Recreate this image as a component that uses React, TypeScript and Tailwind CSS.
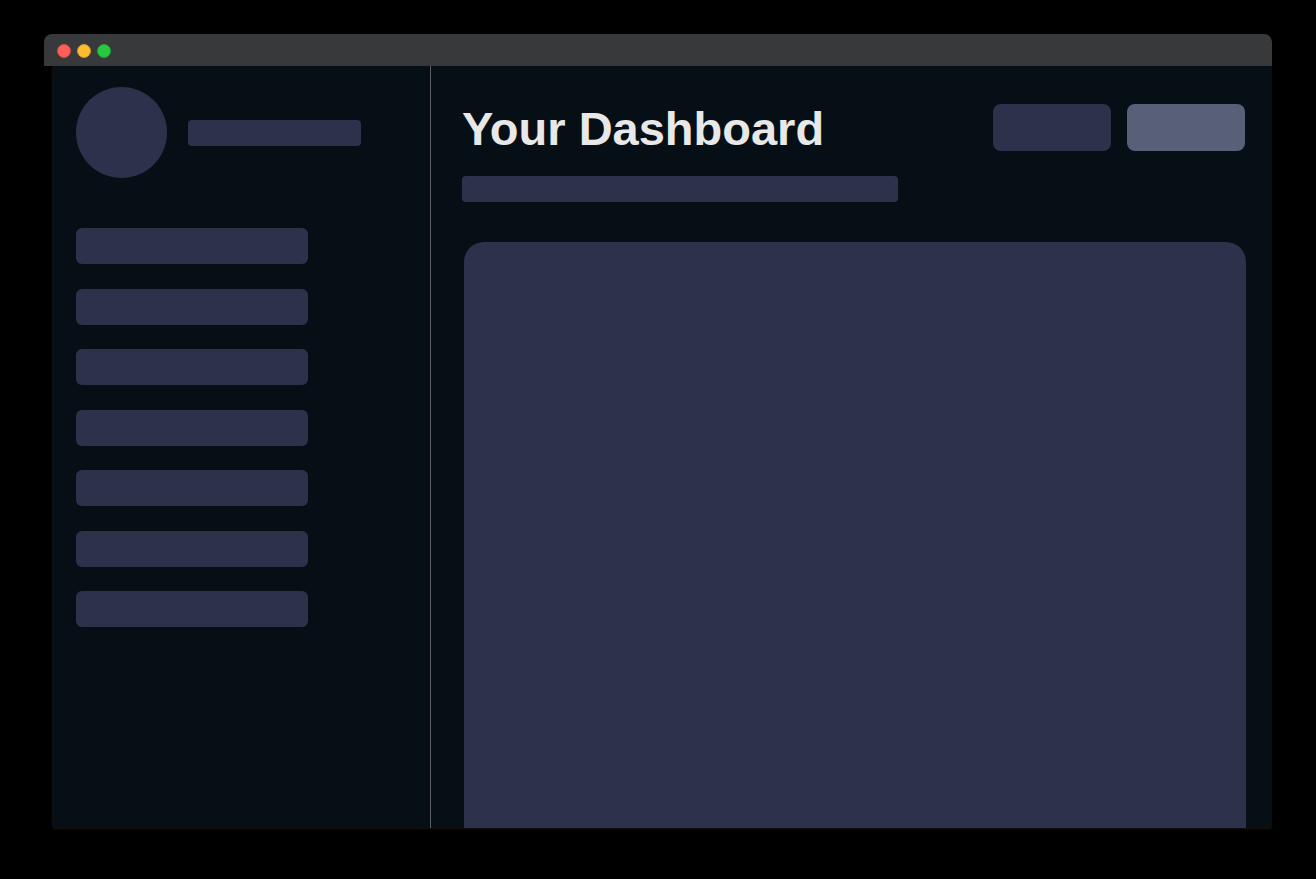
const navItems = [
  "Overview",
  "Projects",
  "Activity",
  "Reports",
  "Messages",
  "Billing",
  "Settings",
];

function TitleBar() {
  return (
    <header className="flex h-8 items-center gap-1.5 rounded-t-lg bg-[#38393a] pl-[13px] pt-0.5">
      <span className="size-3.5 rounded-full border border-[#c94f4b] bg-[#ff5f57]" />
      <span className="size-3.5 rounded-full border border-[#c89a3a] bg-[#febc2e]" />
      <span className="size-3.5 rounded-full border border-[#27a13b] bg-[#28c840]" />
    </header>
  );
}

function Sidebar() {
  return (
    <aside className="w-[378px] shrink-0 border-r border-[#5b5d61] pl-[23px] pt-[21px]">
      <div className="flex items-center gap-[21px]">
        <div className="size-[91px] rounded-full bg-[#2e314b]" />
        <div className="h-[26px] w-[173px] rounded bg-[#2e314b]" />
      </div>
      <nav className="mt-[50px] flex h-[399px] flex-col justify-between">
        {navItems.map((item) => (
          <a
            key={item}
            href="#"
            aria-label={item}
            className="h-9 w-[232px] rounded-md bg-[#2e314b]"
          />
        ))}
      </nav>
    </aside>
  );
}

function Dashboard() {
  return (
    <main className="flex min-w-0 grow flex-col pl-[31px] pr-[26px] pt-[38px]">
      <div className="flex items-start justify-between pr-px">
        <h1 className="text-[47px] font-bold leading-[50px] text-[#e8e8e8]">
          Your Dashboard
        </h1>
        <div className="flex gap-4">
          <button
            type="button"
            aria-label="Export"
            className="h-[47px] w-[118px] rounded-lg bg-[#2e314b]"
          />
          <button
            type="button"
            aria-label="Create"
            className="h-[47px] w-[118px] rounded-lg bg-[#585f78]"
          />
        </div>
      </div>
      <div className="mt-[22px] h-[26px] w-[436px] rounded bg-[#2e314b]" />
      <section
        aria-label="Content"
        className="ml-0.5 mt-10 grow rounded-t-[20px] bg-[#2e314b]"
      />
    </main>
  );
}

export default function App() {
  return (
    <div className="flex min-h-screen flex-col bg-black px-11 pb-[51px] pt-[34px] font-['Liberation_Sans',Arial,sans-serif]">
      <TitleBar />
      <div className="ml-[9px] flex grow rounded-bl bg-[#070f16] shadow-[-1px_1px_2px_#151312]">
        <Sidebar />
        <Dashboard />
      </div>
    </div>
  );
}
